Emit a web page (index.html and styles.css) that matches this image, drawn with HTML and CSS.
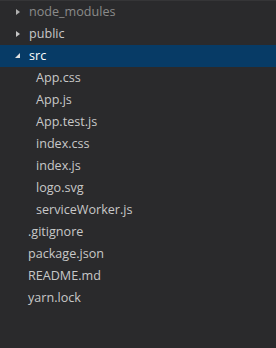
FILE: index.html
```html
<!DOCTYPE html>
<html>
<head>
<meta charset="utf-8">
<link rel="stylesheet" href="styles.css">
</head>
<body>
<div class="tree">
  <div class="row dim"><span class="twisty closed"></span><span class="label">node_modules</span></div>
  <div class="row"><span class="twisty closed"></span><span class="label">public</span></div>
  <div class="row selected"><span class="twisty open"></span><span class="label">src</span></div>
  <div class="row child"><span class="label">App.css</span></div>
  <div class="row child"><span class="label">App.js</span></div>
  <div class="row child"><span class="label">App.test.js</span></div>
  <div class="row child"><span class="label">index.css</span></div>
  <div class="row child"><span class="label">index.js</span></div>
  <div class="row child"><span class="label">logo.svg</span></div>
  <div class="row child"><span class="label">serviceWorker.js</span></div>
  <div class="row file"><span class="label">.gitignore</span></div>
  <div class="row file"><span class="label">package.json</span></div>
  <div class="row file"><span class="label">README.md</span></div>
  <div class="row file"><span class="label">yarn.lock</span></div>
</div>
</body>
</html>
```
FILE: styles.css
```css
html, body {
  margin: 0;
  padding: 0;
  background: #2a2a2c;
  height: 100%;
}
body {
  border-top: 1px solid #353537;
  box-sizing: border-box;
  font-family: "Open Sans", "DejaVu Sans", sans-serif;
  font-size: 12.6px;
  color: #c8c8c8;
}
.tree {
  display: flex;
  flex-direction: column;
}
.row {
  height: 22px;
  display: flex;
  align-items: center;
  padding-left: 14px;
}
.row .label {
  line-height: 22px;
}
.twisty {
  width: 15px;
  height: 22px;
  position: relative;
  flex: none;
}
.twisty.closed::before {
  content: "";
  position: absolute;
  left: 2px;
  top: 8px;
  border-left: 4px solid #c5c5c5;
  border-top: 3px solid transparent;
  border-bottom: 3px solid transparent;
}
.twisty.open::before {
  content: "";
  position: absolute;
  left: 1px;
  top: 8px;
  border-right: 5px solid #e0e0e0;
  border-top: 5px solid transparent;
}
.dim { color: #8a8a8a; }
.dim .twisty.closed::before { border-left-color: #b0b0b0; }
.selected {
  background: #073b66;
  color: #ffffff;
}
.child { padding-left: 36px; }
.file { padding-left: 28px; }
```
